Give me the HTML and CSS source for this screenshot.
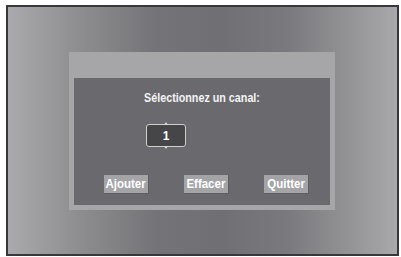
FILE: index.html
```html
<!DOCTYPE html>
<html>
<head>
<meta charset="utf-8">
<link rel="stylesheet" href="styles.css">
</head>
<body>
<div class="screen">
  <div class="panel">
    <div class="inner">
      <div class="title">Sélectionnez un canal:</div>
      <div class="spin">
        <span class="arrow up"></span>
        <span class="value">1</span>
        <span class="arrow down"></span>
      </div>
      <div class="buttons">
        <div class="btn"><span class="label">Ajouter</span></div>
        <div class="btn"><span class="label">Effacer</span></div>
        <div class="btn"><span class="label">Quitter</span></div>
      </div>
    </div>
  </div>
</div>
</body>
</html>
```
FILE: styles.css
```css
html, body {
  margin: 0;
  padding: 0;
  background: #ffffff;
  width: 401px;
  height: 257px;
  overflow: hidden;
}
.screen {
  box-sizing: border-box;
  margin: 5px 0 0 6px;
  width: 393px;
  height: 251px;
  border: 2px solid #38383a;
  background: linear-gradient(to right, #aaaaac 0%, #8e8e91 18%, #747478 38%, #707074 55%, #7a7a7e 72%, #949497 88%, #a9a9ab 100%);
  padding: 45px 0 0 61px;
  font-family: "Liberation Sans", Arial, sans-serif;
}
.panel {
  width: 266px;
  height: 158px;
  box-sizing: border-box;
  background: #a6a6a9;
  padding: 26px 5px 5px 5px;
}
.inner {
  height: 127px;
  background: #6a6a6e;
  padding-top: 14px;
  box-sizing: border-box;
}
.title {
  text-align: center;
  color: #f4f4f4;
  font-weight: bold;
  font-size: 12.5px;
  line-height: 12px;
  transform: scaleX(0.86);
}
.spin {
  position: relative;
  margin: 20px 0 0 72px;
  width: 40px;
  height: 23px;
  box-sizing: border-box;
  border: 1px solid #cfcfcf;
  border-radius: 3px;
  background: #464649;
  display: flex;
  align-items: center;
  justify-content: center;
}
.value {
  color: #ffffff;
  font-weight: bold;
  font-size: 12px;
  line-height: 12px;
}
.arrow {
  position: absolute;
  left: 17px;
  width: 0;
  height: 0;
  border-left: 2px solid transparent;
  border-right: 2px solid transparent;
}
.arrow.up {
  top: -3px;
  border-bottom: 3px solid #d8d8d8;
}
.arrow.down {
  bottom: -3px;
  border-top: 3px solid #d8d8d8;
}
.buttons {
  display: flex;
  gap: 35px;
  margin: 28px 0 0 30px;
}
.btn {
  width: 45px;
  height: 19px;
  box-sizing: border-box;
  background: #a4a4a7;
  border-right: 1px solid #5e5e62;
  border-bottom: 1px solid #5e5e62;
  color: #ffffff;
  font-weight: bold;
  font-size: 13.5px;
  line-height: 18px;
  text-align: center;
  white-space: nowrap;
  display: flex;
  justify-content: center;
}
.label {
  display: inline-block;
  transform: scaleX(0.85);
}
```
